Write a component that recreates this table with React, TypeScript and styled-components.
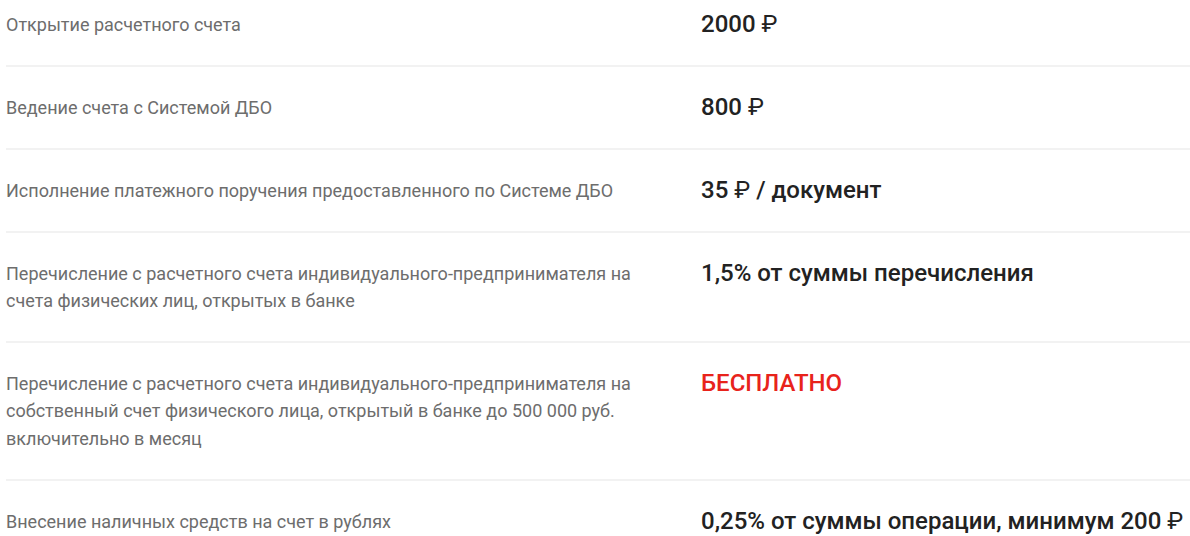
import React from "react";
import styled, { createGlobalStyle } from "styled-components";

const Global = createGlobalStyle`
  html, body { margin: 0; padding: 0; background: #fff; }
  body { font-family: Roboto, "Noto Sans", Arial, sans-serif; }
`;

const Page = styled.div`
  padding-left: 6px;
  margin-top: -16px;
  overflow: hidden;
`;

const List = styled.div`
  display: flex;
  flex-direction: column;
`;

const Row = styled.div`
  display: grid;
  grid-template-columns: 655px 1fr;
  column-gap: 40px;
  padding: 27px 0 26.8px;
  border-bottom: 2px solid #f2f2f2;
  &:last-child { border-bottom: none; }
`;

const Label = styled.div`
  font-size: 18px;
  line-height: 27.2px;
  color: #6d6d6d;
`;

const Value = styled.div<{ $accent?: boolean }>`
  font-size: 24px;
  line-height: 26px;
  font-weight: 500;
  color: ${(p) => (p.$accent ? "#e8231b" : "#222")};
`;

const Rub = styled.span`
  font-weight: 400;
`;

const renderValue = (v: string) => {
  const parts = v.split("₽");
  return parts.map((p, i) => (
    <React.Fragment key={i}>
      {p}
      {i < parts.length - 1 && <Rub>₽</Rub>}
    </React.Fragment>
  ));
};

const rows: { label: string; value: string; accent?: boolean }[] = [
  { label: "Открытие расчетного счета", value: "2000 ₽" },
  { label: "Ведение счета с Системой ДБО", value: "800 ₽" },
  { label: "Исполнение платежного поручения предоставленного по Системе ДБО", value: "35 ₽ / документ" },
  {
    label: "Перечисление с расчетного счета индивидуального-предпринимателя на счета физических лиц, открытых в банке",
    value: "1,5% от суммы перечисления",
  },
  {
    label:
      "Перечисление с расчетного счета индивидуального-предпринимателя на собственный счет физического лица, открытый в банке до 500 000 руб. включительно в месяц",
    value: "БЕСПЛАТНО",
    accent: true,
  },
  { label: "Внесение наличных средств на счет в рублях", value: "0,25% от суммы операции, минимум 200 ₽" },
];

export default function App() {
  return (
    <>
      <Global />
      <Page>
        <List>
          {rows.map((r, i) => (
            <Row key={i}>
              <Label>{r.label}</Label>
              <Value $accent={r.accent}>{renderValue(r.value)}</Value>
            </Row>
          ))}
        </List>
      </Page>
    </>
  );
}
